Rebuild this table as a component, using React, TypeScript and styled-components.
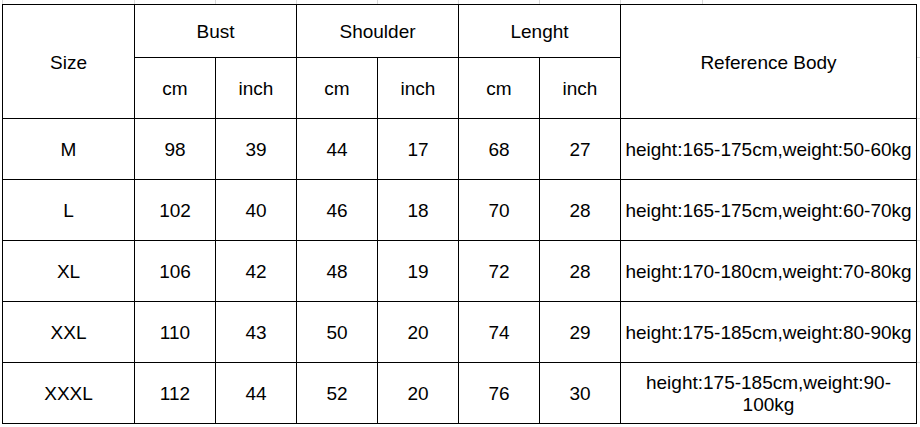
import { createGlobalStyle, styled } from "styled-components"

const Global = createGlobalStyle`
    html, body {
        margin: 0;
        padding: 0;
        background: #fff;
    }
    body {
        font-family: "Liberation Sans", Arial, sans-serif;
        color: #000;
    }
`

const gridX = [2, 134, 215, 296, 377, 458, 539, 620, 702]
const gridY = [57, 118, 179, 240, 301, 362]

// faint spreadsheet gridlines peeking out around the bordered table
const Sheet = styled.div`
    width: 920px;
    height: 427px;
    padding: 4px 0 0 2px;
    box-sizing: border-box;
    overflow: hidden;
    background-repeat: no-repeat;
    background-image: ${[
        ...gridX.map(() => "linear-gradient(#d9d9d9, #d9d9d9)"),
        ...gridY.map(() => "linear-gradient(#d9d9d9, #d9d9d9)"),
    ].join(", ")};
    background-size: ${[
        ...gridX.map(() => "1px 4px"),
        ...gridY.map(() => "4px 1px"),
    ].join(", ")};
    background-position: ${[
        ...gridX.map((x) => `${x}px 0`),
        ...gridY.map((y) => `917px ${y}px`),
    ].join(", ")};
`

const Grid = styled.div`
    display: grid;
    grid-template-columns: 132px repeat(6, 81px) 296px;
    grid-template-rows: 53px repeat(6, 61px);
    width: max-content;
    border-top: 1px solid #000;
    border-left: 1px solid #000;
`

const Cell = styled.div<{ $col?: number; $row?: number }>`
    grid-column: span ${(p) => p.$col ?? 1};
    grid-row: span ${(p) => p.$row ?? 1};
    box-sizing: border-box;
    border-right: 1px solid #000;
    border-bottom: 1px solid #000;
    padding-top: 2px;
    display: flex;
    align-items: center;
    justify-content: center;
    font-size: 19px;
    line-height: 22px;
    color: #000;
`

const Text = styled.span`
    display: block;
    text-align: center;
    white-space: nowrap;
`

const rows = [
    ["M", "98", "39", "44", "17", "68", "27", "height:165-175cm,weight:50-60kg"],
    ["L", "102", "40", "46", "18", "70", "28", "height:165-175cm,weight:60-70kg"],
    ["XL", "106", "42", "48", "19", "72", "28", "height:170-180cm,weight:70-80kg"],
    ["XXL", "110", "43", "50", "20", "74", "29", "height:175-185cm,weight:80-90kg"],
    ["XXXL", "112", "44", "52", "20", "76", "30", "height:175-185cm,weight:90-\n100kg"],
]

export default function App() {
    return (
        <>
            <Global />
            <Sheet>
                <Grid>
                    <Cell $row={2}>Size</Cell>
                    <Cell $col={2}>Bust</Cell>
                    <Cell $col={2}>Shoulder</Cell>
                    <Cell $col={2}>Lenght</Cell>
                    <Cell $row={2}>Reference Body</Cell>
                    <Cell>cm</Cell>
                    <Cell>inch</Cell>
                    <Cell>cm</Cell>
                    <Cell>inch</Cell>
                    <Cell>cm</Cell>
                    <Cell>inch</Cell>
                    {rows.map((r) =>
                        r.map((v, i) => (
                            <Cell key={r[0] + i}>
                                <Text>
                                    {v.split("\n").map((line, j) => (
                                        <span key={j}>
                                            {j > 0 && <br />}
                                            {line}
                                        </span>
                                    ))}
                                </Text>
                            </Cell>
                        ))
                    )}
                </Grid>
            </Sheet>
        </>
    )
}
